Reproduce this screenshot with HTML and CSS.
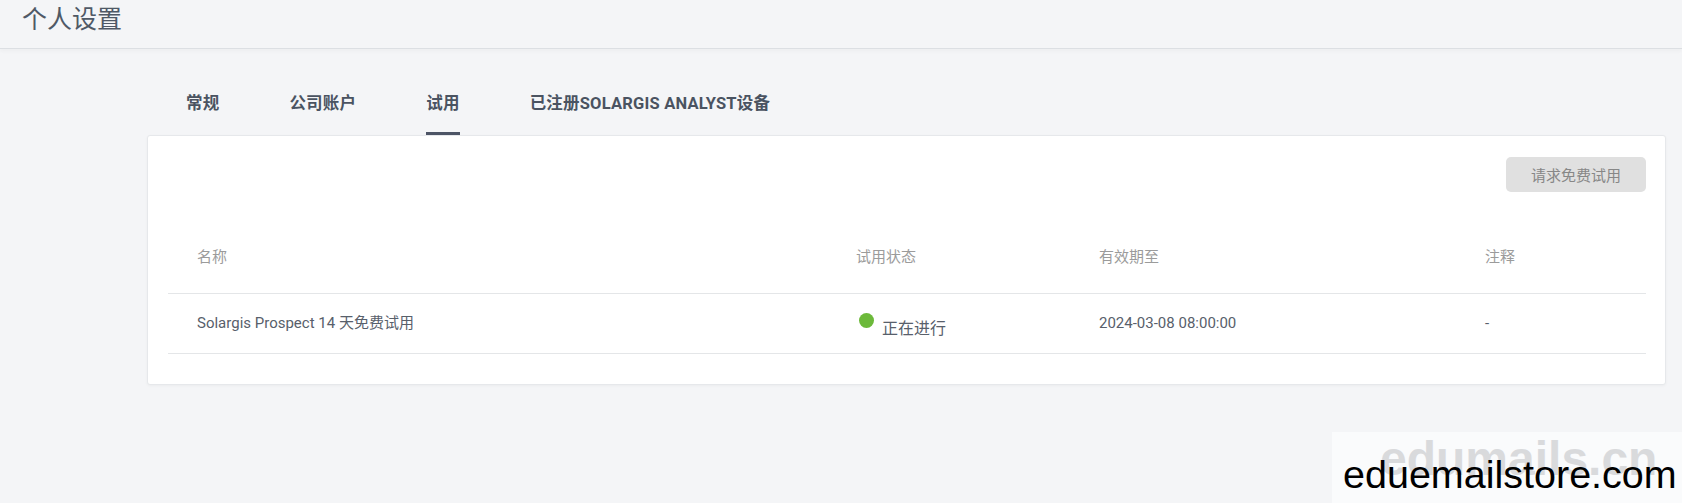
FILE: index.html
```html
<!doctype html>
<html lang="zh">

<head>
  <meta charset="UTF-8">
  <meta name="viewport" content="width=device-width, initial-scale=1">
  <title>个人设置</title>
  <link rel="stylesheet" href="styles.css">
</head>

<body>
  <header class="page-header">
    <h1>个人设置</h1>
  </header>

  <main class="settings">
    <nav class="tabs">
      <a class="tab">常规</a>
      <a class="tab">公司账户</a>
      <a class="tab active">试用</a>
      <a class="tab">已注册SOLARGIS ANALYST设备</a>
    </nav>

    <section class="card">
      <div class="toolbar">
        <button class="btn" disabled>请求免费试用</button>
      </div>
      <table class="trials">
        <thead>
          <tr>
            <th class="col-name">名称</th>
            <th class="col-status">试用状态</th>
            <th class="col-date">有效期至</th>
            <th>注释</th>
          </tr>
        </thead>
        <tbody>
          <tr>
            <td>Solargis Prospect 14 天免费试用</td>
            <td>
              <div class="status">
                <span class="dot"></span>
                <span class="status-text">正在进行</span>
              </div>
            </td>
            <td>2024-03-08 08:00:00</td>
            <td>-</td>
          </tr>
        </tbody>
      </table>
    </section>
  </main>

  <div class="watermark">
    <span class="wm-back">edumails.cn</span>
    <span class="wm-front">eduemailstore.com</span>
  </div>
</body>

</html>
```

FILE: styles.css
```css
body {
  margin: 0;
  min-height: 503px;
  position: relative;
  overflow: hidden;
  background-color: #f4f5f7;
  color: #555d69;
  font-family: Roboto, "Noto Sans CJK SC", sans-serif;
}

.page-header {
  height: 48px;
  padding-left: 22px;
  border-bottom: 1px solid #dcdfe3;
  box-shadow: 0 3px 3px rgba(0, 0, 0, .025);
}

.page-header h1 {
  margin: 0;
  font: 400 25px/34px "Noto Sans CJK SC", sans-serif;
  color: #4f5966;
}

.settings {
  padding: 35px 16px 0 147px;
}

/* tabs */

.tabs {
  display: flex;
  gap: 70px;
  padding-left: 39px;
}

.tab {
  padding: 10px 0 18px 0;
  border-bottom: 3px solid transparent;
  font: 700 16.5px/20px Roboto, "Noto Sans CJK SC", sans-serif;
  color: #4a5361;
  letter-spacing: .2px;
}

.tab.active {
  border-bottom-color: #4d5566;
}

/* card */

.card {
  background: #fff;
  border: 1px solid #e6e8eb;
  border-radius: 3px;
  box-shadow: 0 1px 3px rgba(0, 0, 0, .04);
  padding: 21px 19px 30px 20px;
}

.toolbar {
  display: flex;
  justify-content: flex-end;
}

.btn {
  width: 140px;
  height: 35px;
  border: 0;
  border-radius: 5px;
  background: #e0e0e0;
  color: #878787;
  font: 400 15px "Noto Sans CJK SC", sans-serif;
}

/* table */

.trials {
  width: 100%;
  margin-top: 39px;
  border-collapse: collapse;
  font-size: 15px;
  line-height: 20px;
}

.trials th {
  padding: 16px 0 26px 29px;
  text-align: left;
  font-weight: 400;
  color: #9b9b9b;
  border-bottom: 1px solid #e4e6e8;
}

.trials td {
  padding: 19px 0 20px 29px;
  border-bottom: 1px solid #e4e6e8;
  color: #58606b;
}

.col-name {
  width: 630px;
}

.col-status {
  width: 214px;
}

.col-date {
  width: 357px;
}

.status {
  display: flex;
  align-items: flex-start;
  gap: 8px;
  height: 20px;
  margin-left: 3px;
}

.dot {
  flex: none;
  width: 15px;
  height: 15px;
  border-radius: 50%;
  background: #6cb93a;
}

.status-text {
  margin-top: 6px;
  font-size: 16px;
}

/* overlay in the corner */

.watermark {
  position: absolute;
  left: 1332px;
  top: 432px;
  width: 350px;
  height: 71px;
  background: #fafbfc;
  font-family: "Liberation Sans", Arial, sans-serif;
}

.wm-back {
  position: absolute;
  left: 48px;
  top: -1px;
  font-size: 48px;
  font-weight: 700;
  color: #d9dadc;
}

.wm-front {
  position: absolute;
  left: 11px;
  top: 20px;
  font-size: 39.5px;
  color: #000;
}
```
